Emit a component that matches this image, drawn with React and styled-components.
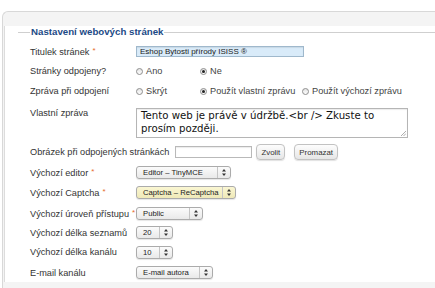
import React from 'react'
import styled, { createGlobalStyle } from 'styled-components'

const GlobalStyle = createGlobalStyle`
  html, body {
    margin: 0;
    padding: 0;
    background: #fff;
  }
  body {
    font-family: "Liberation Sans", Arial, sans-serif;
    font-size: 9.2px;
    color: #333;
  }
`

const Panel = styled.div`
  box-sizing: border-box;
  height: 277px;
  margin: 11px 0 0 2px;
  padding: 20px 0 0 1px;
  background: #f4f4f4;
  border: 1px solid #d8d8d8;
  border-right: none;
  border-bottom: none;
  border-top-left-radius: 6px;
`

const Content = styled.div`
  height: 100%;
  background: #fff;
  border-left: 1px solid #dcdcdc;
  padding-left: 13px;
`

const Fieldset = styled.fieldset`
  margin: -6px 0 0;
  padding: 3px 0 0 12px;
  border: none;
  border-top: 1px solid #cfcfcf;
  min-width: 0;
`

const Legend = styled.legend`
  padding: 0 1px;
  font-size: 9.7px;
  line-height: 12px;
  font-weight: bold;
  color: #1c4a86;
`

const Row = styled.div`
  display: flex;
  align-items: ${p => (p.$top ? 'flex-start' : 'center')};
  height: ${p => p.$h || 20}px;
  padding-top: ${p => p.$pt || 0}px;
  box-sizing: border-box;
`

const Label = styled.div`
  flex-shrink: 0;
  width: ${p => (p.$auto ? 'auto' : '106px')};
  margin-right: ${p => (p.$auto ? '6px' : '0')};
  white-space: nowrap;
  color: #333;
  padding-top: ${p => p.$pt || 0}px;
`

const Star = styled.span`
  color: #e66a2c;
  font-size: 8px;
  margin-left: 3px;
  vertical-align: 2px;
`

const TextInput = styled.div`
  box-sizing: border-box;
  width: ${p => p.$w}px;
  height: ${p => p.$h || 11}px;
  padding: 0 3px;
  font-size: 8px;
  line-height: ${p => (p.$h || 11) - 2}px;
  color: #222;
  white-space: nowrap;
  overflow: hidden;
  background: ${p => p.$bg || '#fff'};
  border: 1px solid ${p => p.$border || '#b9b9b9'};
  box-shadow: inset 0 1px 1px rgba(0, 0, 0, 0.08);
`

const Option = styled.label`
  display: flex;
  align-items: center;
  width: ${p => (p.$w ? `${p.$w}px` : 'auto')};
  color: #444;
  white-space: nowrap;
`

const RadioDot = styled.span`
  box-sizing: border-box;
  width: 7px;
  height: 7px;
  margin-right: 3px;
  border-radius: 50%;
  border: 1px solid #8e8e8e;
  background: linear-gradient(#e4e4e4, #fdfdfd);
  display: inline-flex;
  align-items: center;
  justify-content: center;

  &::after {
    content: '';
    width: 3px;
    height: 3px;
    border-radius: 50%;
    background: ${p => (p.$on ? '#222' : 'transparent')};
  }
`

const TextArea = styled.div`
  box-sizing: border-box;
  position: relative;
  width: 272px;
  height: 30px;
  padding: 1px 4px;
  font-family: "DejaVu Sans", Verdana, sans-serif;
  font-size: 10.2px;
  line-height: 12.5px;
  color: #111;
  border: 1px solid #b5b5b5;
  box-shadow: inset 0 1px 1px rgba(0, 0, 0, 0.08);
`

const Grip = styled.svg`
  position: absolute;
  right: 1px;
  bottom: 1px;
`

const Button = styled.div`
  box-sizing: border-box;
  height: 16px;
  margin-left: ${p => p.$ml || 0}px;
  padding: 0 4px;
  display: flex;
  align-items: center;
  font-size: 7.9px;
  color: #333;
  border: 1px solid #c2c2c2;
  border-radius: 4px;
  background: linear-gradient(#fdfdfd, #e6e6e6);
  box-shadow: 0 1px 1px rgba(0, 0, 0, 0.12);
`

const Select = styled.div`
  box-sizing: border-box;
  width: ${p => p.$w}px;
  height: 13px;
  display: flex;
  align-items: stretch;
  font-size: 7.7px;
  color: #222;
  border: 1px solid #ababab;
  border-radius: 3px;
  background: ${p =>
    p.$yellow
      ? 'linear-gradient(#faf6d2, #efe9b8)'
      : 'linear-gradient(#fbfbfb, #e9e9e9)'};
  box-shadow: 0 1px 1px rgba(0, 0, 0, 0.1);
`

const SelectText = styled.span`
  flex: 1;
  padding-left: 6px;
  line-height: 11px;
  white-space: nowrap;
  overflow: hidden;
`

const SelectArrow = styled.span`
  width: 12px;
  display: flex;
  align-items: center;
  justify-content: center;
  border-left: 1px solid #c4c4c4;
`

const Arrows = () => (
  <svg width="4" height="7" viewBox="0 0 4 7">
    <path d="M2 0 L4 2.6 H0 Z M2 7 L4 4.4 H0 Z" fill="#333" />
  </svg>
)

const Dropdown = ({ w, yellow, children }) => (
  <Select $w={w} $yellow={yellow}>
    <SelectText>{children}</SelectText>
    <SelectArrow>
      <Arrows />
    </SelectArrow>
  </Select>
)

const Radio = ({ on, w, children }) => (
  <Option $w={w}>
    <RadioDot $on={on} />
    {children}
  </Option>
)

export default function App() {
  return (
    <>
      <GlobalStyle />
      <Panel>
        <Content>
          <Fieldset>
            <Legend>Nastavení webových stránek</Legend>
            <Row $h={20}>
              <Label>
                Titulek stránek<Star>*</Star>
              </Label>
              <TextInput $w={168} $bg="#d9ebf9" $border="#9fb8cc">
                Eshop Bytosti přírody ISISS ®
              </TextInput>
            </Row>
            <Row $h={20}>
              <Label>Stránky odpojeny?</Label>
              <Radio w={64}>Ano</Radio>
              <Radio on>Ne</Radio>
            </Row>
            <Row $h={20}>
              <Label>Zpráva při odpojení</Label>
              <Radio w={64}>Skrýt</Radio>
              <Radio on w={102}>Použít vlastní zprávu</Radio>
              <Radio>Použít výchozí zprávu</Radio>
            </Row>
            <Row $top $h={41} $pt={7}>
              <Label $pt={0}>Vlastní zpráva</Label>
              <TextArea>
                Tento web je právě v údržbě.&lt;br /&gt; Zkuste to prosím později.
                <Grip width="6" height="6" viewBox="0 0 6 6">
                  <path d="M6 1 L1 6 M6 3.5 L3.5 6" stroke="#999" strokeWidth="0.8" />
                </Grip>
              </TextArea>
            </Row>
            <Row>
              <Label $auto>Obrázek při odpojených stránkách</Label>
              <TextInput $w={77} $h={12} />
              <Button $ml={4}>Zvolit</Button>
              <Button $ml={9}>Promazat</Button>
            </Row>
            <Row>
              <Label>
                Výchozí editor<Star>*</Star>
              </Label>
              <Dropdown w={95}>Editor – TinyMCE</Dropdown>
            </Row>
            <Row $h={21}>
              <Label>
                Výchozí Captcha<Star>*</Star>
              </Label>
              <Dropdown w={100} yellow>
                Captcha – ReCaptcha
              </Dropdown>
            </Row>
            <Row $h={20}>
              <Label>
                Výchozí úroveň přístupu<Star>*</Star>
              </Label>
              <Dropdown w={67}>Public</Dropdown>
            </Row>
            <Row $h={19}>
              <Label>Výchozí délka seznamů</Label>
              <Dropdown w={37}>20</Dropdown>
            </Row>
            <Row $h={20}>
              <Label>Výchozí délka kanálu</Label>
              <Dropdown w={37}>10</Dropdown>
            </Row>
            <Row $h={21}>
              <Label>E-mail kanálu</Label>
              <Dropdown w={77}>E-mail autora</Dropdown>
            </Row>
          </Fieldset>
        </Content>
      </Panel>
    </>
  )
}
